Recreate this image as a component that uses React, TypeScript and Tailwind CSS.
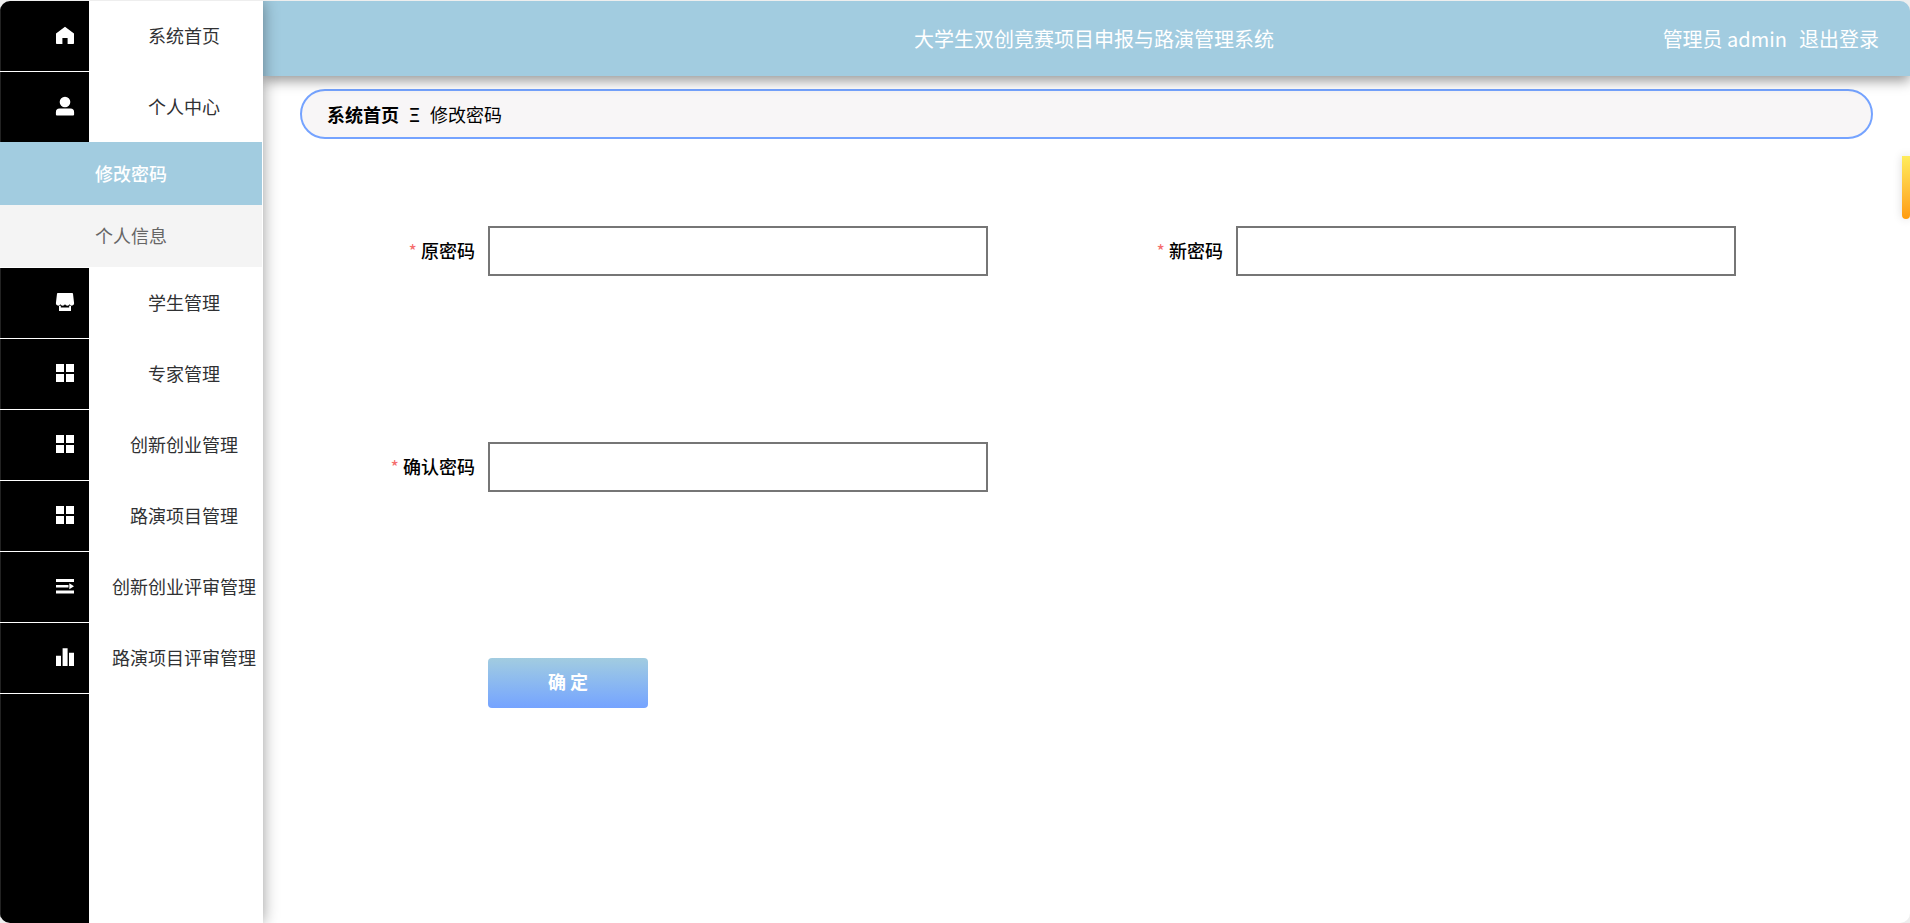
import type { ReactNode } from 'react';

type MenuItem = { label: string; icon: ReactNode; children?: { label: string; active?: boolean }[] };

function Icon({ children }: { children: ReactNode }) {
  return (
    <svg viewBox="0 0 20 20" className="size-5 shrink-0 fill-white" aria-hidden="true">
      {children}
    </svg>
  );
}

const homeIcon = (
  <Icon>
    <path d="M10 1.7 19 8.400v9.800a.8.8 0 0 1-.8.8H12.600v-6H7.400v6H1.800a.8.8 0 0 1-.8-.8V8.400z" />
  </Icon>
);

const userIcon = (
  <Icon>
    <circle cx="10" cy="6" r="5.3" />
    <path d="M4.5 12.6h11a3.6 3.6 0 0 1 3.6 3.6v2.3a1 1 0 0 1-1 1H1.9a1 1 0 0 1-1-1v-2.3a3.6 3.6 0 0 1 3.6-3.6z" />
  </Icon>
);

const shopIcon = (
  <Icon>
    <path d="M2.800 1h14.400a.8.8 0 0 1 .8.7l1.100 9.600a2.300 2.300 0 0 1-4.400 1 2.600 2.600 0 0 1-4.700 0 2.600 2.600 0 0 1-4.700 0 2.300 2.300 0 0 1-4.400-1L2 1.700a.8.8 0 0 1 .8-.7z" />
    <path d="M4 13.800h1.800v1.600h8.400v-1.600H16v5.200H4z" />
  </Icon>
);

const menuIcon = (
  <Icon>
    <path d="M1 1h8v8H1zM11 1h8v8h-8zM1 11h8v8H1zM11 11h8v8h-8z" />
  </Icon>
);

const unfoldIcon = (
  <Icon>
    <path d="M1 3h18v2.900H1zM1 8.900h12.500v2.700H1zM1 14.600h18v2.900H1zM14.300 7.200 19 10.250l-4.700 3.050z" />
  </Icon>
);

const dataIcon = (
  <Icon>
    <path d="M1 8.700h5V19H1zM7.600 1.300h5V19h-5zM14 5.700h5V19h-5z" />
  </Icon>
);

const menu: MenuItem[] = [
  { label: '系统首页', icon: homeIcon },
  {
    label: '个人中心',
    icon: userIcon,
    children: [{ label: '修改密码', active: true }, { label: '个人信息' }],
  },
  { label: '学生管理', icon: shopIcon },
  { label: '专家管理', icon: menuIcon },
  { label: '创新创业管理', icon: menuIcon },
  { label: '路演项目管理', icon: menuIcon },
  { label: '创新创业评审管理', icon: unfoldIcon },
  { label: '路演项目评审管理', icon: dataIcon },
];

function Sidebar() {
  return (
    <nav className="relative z-20 flex w-[263px] shrink-0 flex-col bg-white shadow-[0_0_15px_rgba(0,0,0,0.4)]">
      <ul>
        {menu.map((item) => (
          <li key={item.label} className={item.children ? '' : 'border-b border-white'}>
            <a href="#" className="flex h-[70px] text-[#303133]">
              <span className="flex w-[89px] items-center justify-end border-l border-[#222222] bg-black pb-0.5 pr-[14px]">
                {item.icon}
              </span>
              <span className="flex flex-1 items-center justify-center whitespace-nowrap pb-0.5 pl-4">
                {item.label}
              </span>
            </a>
            {item.children && (
              <ul className="mr-px pb-px">
                {item.children.map((child) => (
                  <li key={child.label}>
                    <a
                      href="#"
                      className={
                        child.active
                          ? 'flex h-[63px] items-center justify-center bg-[#a2cce0] pb-0.5 font-medium text-white'
                          : 'flex h-[62px] items-center justify-center bg-[#f4f4f4] pb-0.5 text-[#666666]'
                      }
                    >
                      {child.label}
                    </a>
                  </li>
                ))}
              </ul>
            )}
          </li>
        ))}
      </ul>
      <div className="w-[89px] flex-1 border-l border-[#222222] bg-black" />
    </nav>
  );
}

function Header() {
  return (
    <header className="relative z-10 grid h-[75px] grid-cols-[1fr_auto_1fr] items-center bg-[#a2cce0] pl-[46px] pr-[31px] text-xl text-white shadow-[0_5px_12px_rgba(0,0,0,0.4)]">
      <h1 className="col-start-2">大学生双创竟赛项目申报与路演管理系统</h1>
      <div className="flex justify-end gap-3">
        <span>管理员 admin</span>
        <button type="button">退出登录</button>
      </div>
    </header>
  );
}

function Field({ id, label }: { id: string; label: string }) {
  return (
    <div className="flex items-center">
      <label htmlFor={id} className="w-[150px] shrink-0 pb-0.5 pr-[13px] text-right font-medium text-black">
        <span className="mr-1 font-normal text-[#f56c6c]">*</span>
        {label}
      </label>
      <input id={id} type="password" className="h-[50px] w-[500px] border-2 border-[#767676] bg-white px-3 outline-none" />
    </div>
  );
}

export default function App() {
  return (
    <div className="flex min-h-screen bg-[#eeeeee] pt-px font-['Noto_Sans_CJK_SC',sans-serif] text-[18px] leading-6">
      <div className="relative flex flex-1 overflow-hidden rounded-[10px] bg-white">
        <Sidebar />
        <div className="min-w-0 flex-1">
          <Header />
          <main className="px-[37px] pt-[13px]">
            <nav
              aria-label="面包屑"
              className="flex h-[50px] items-center gap-2.5 rounded-full border-2 border-[#75a3ff] bg-[#f8f6f7] px-[25px] text-black"
            >
              <a href="#" className="font-bold">系统首页</a>
              <span className="font-medium">Ξ</span>
              <span>修改密码</span>
            </nav>
            <form className="pl-[38px] pr-[39px] pt-[87px]" onSubmit={(e) => e.preventDefault()}>
              <div className="grid grid-cols-2 gap-y-[166px]">
                <Field id="old-password" label="原密码" />
                <Field id="new-password" label="新密码" />
                <Field id="confirm-password" label="确认密码" />
                <div className="col-start-1 pl-[150px]">
                  <button
                    type="submit"
                    className="h-[50px] w-40 rounded bg-linear-to-b from-[#a2cce0] to-[#75a3ff] pb-1 font-bold text-white"
                  >
                    确 定
                  </button>
                </div>
              </div>
            </form>
          </main>
        </div>
        <div className="absolute right-0 top-[155px] h-[63px] w-2 rounded-b bg-linear-to-b from-[#ffec5c] to-[#ff9b0b] shadow-[0_0_10px_rgba(0,0,0,0.15)]" />
      </div>
    </div>
  );
}
